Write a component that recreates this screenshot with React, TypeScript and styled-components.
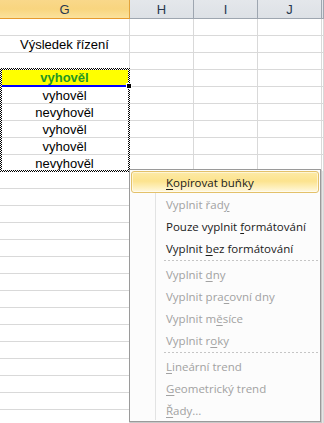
import styled, { createGlobalStyle } from "styled-components";

const GlobalStyle = createGlobalStyle`
  html, body {
    margin: 0;
    padding: 0;
    background: #ffffff;
    overflow: hidden;
  }
`;

const columns = ["G", "H", "I", "J", ""];
const ROW_COUNT = 24;

interface CellData {
  text: string;
  highlight?: boolean;
}

const cells: Record<number, CellData> = {
  1: { text: "Výsledek řízení" },
  3: { text: "vyhověl", highlight: true },
  4: { text: "vyhověl" },
  5: { text: "nevyhověl" },
  6: { text: "vyhověl" },
  7: { text: "vyhověl" },
  8: { text: "nevyhověl" },
};

interface MenuEntry {
  label: React.ReactNode;
  disabled?: boolean;
  active?: boolean;
  separator?: boolean;
}

const menu: MenuEntry[] = [
  { label: <><u>K</u>opírovat buňky</>, active: true },
  { label: <>Vyplnit řad<u>y</u></>, disabled: true },
  { label: <>Pouze vyplnit <u>f</u>ormátování</> },
  { label: <>Vyplnit <u>b</u>ez formátování</> },
  { label: null, separator: true },
  { label: <>Vyplnit <u>d</u>ny</>, disabled: true },
  { label: <>Vyplnit pra<u>c</u>ovní dny</>, disabled: true },
  { label: <>Vyplnit m<u>ě</u>síce</>, disabled: true },
  { label: <>Vyplnit r<u>o</u>ky</>, disabled: true },
  { label: null, separator: true },
  { label: <><u>L</u>ineární trend</>, disabled: true },
  { label: <><u>G</u>eometrický trend</>, disabled: true },
  { label: <><u>Ř</u>ady...</>, disabled: true },
];

const App = () => {
  return (
    <>
      <GlobalStyle />
      <Sheet>
        <Grid>
          {columns.map((c, i) => (
            <HeaderCell key={c + i} selected={i === 0}>
              {c}
            </HeaderCell>
          ))}
          {Array.from({ length: ROW_COUNT }).map((_, r) =>
            columns.map((c, i) => {
              const data = i === 0 ? cells[r] : undefined;
              return (
                <Cell key={r + "-" + i} highlight={data?.highlight}>
                  {data?.text}
                </Cell>
              );
            })
          )}
        </Grid>

        <CopyFrame />
        <FillHandle />

        <Menu>
          {menu.map((m, i) =>
            m.separator ? (
              <Separator key={i} />
            ) : (
              <MenuItem key={i} disabled={m.disabled} active={m.active}>
                <span>{m.label}</span>
              </MenuItem>
            )
          )}
        </Menu>
      </Sheet>
    </>
  );
};

const Sheet = styled.div`
  position: relative;
  width: 324px;
  height: 423px;
  overflow: hidden;
  background: #ffffff;
`;

const Grid = styled.div`
  display: grid;
  grid-template-columns: 130px 64px 64px 64px 1fr;
  grid-template-rows: 19px;
  grid-auto-rows: 17px;
`;

const HeaderCell = styled.div<{ selected?: boolean }>`
  box-sizing: border-box;
  display: flex;
  align-items: center;
  justify-content: center;
  font-family: "Liberation Sans", Arial, sans-serif;
  font-size: 13px;
  color: #27384f;
  border-right: 1px solid ${(p) => (p.selected ? "#e3a33b" : "#9ea6b0")};
  border-bottom: 1px solid ${(p) => (p.selected ? "#e69a2e" : "#9ea6b0")};
  background: ${(p) =>
    p.selected
      ? "linear-gradient(to bottom, #f9d88a 0%, #f8d57f 50%, #fbe29c 100%)"
      : "linear-gradient(to bottom, #e4e7eb 0%, #dde1e6 100%)"};
  padding-top: 1px;
`;

const Cell = styled.div<{ highlight?: boolean }>`
  box-sizing: border-box;
  display: flex;
  align-items: center;
  justify-content: center;
  font-family: "Liberation Sans", Arial, sans-serif;
  font-size: 13px;
  white-space: nowrap;
  border-right: 1px solid #d9d9d9;
  border-bottom: ${(p) => (p.highlight ? "2px solid #0000ff" : "1px solid #d9d9d9")};
  background: ${(p) => (p.highlight ? "#ffff00" : "transparent")};
  font-weight: ${(p) => (p.highlight ? 700 : 400)};
  color: ${(p) => (p.highlight ? "#249624" : "#000000")};
`;

const CopyFrame = styled.div`
  position: absolute;
  left: 0;
  top: 68px;
  width: 130px;
  height: 104px;
  box-sizing: border-box;
  padding: 2px;
  background: repeating-conic-gradient(#000 0 25%, #fff 0 50%) 0 0 / 2px 2px;
  -webkit-mask: linear-gradient(#000 0 0) content-box, linear-gradient(#000 0 0);
  -webkit-mask-composite: xor;
  mask-composite: exclude;
  pointer-events: none;
`;

const FillHandle = styled.div`
  position: absolute;
  left: 126px;
  top: 83px;
  width: 4px;
  height: 4px;
  background: #000;
  border: 1px solid #fff;
`;

const Menu = styled.div`
  position: absolute;
  left: 129px;
  top: 169px;
  width: 192px;
  box-sizing: border-box;
  padding: 1px 1px 0 1px;
  background: #fcfcfc;
  border: 1px solid #9a9a9a;
  box-shadow: 1px 1px 0 #c8c8c8, 2px 2px 0 #e4e4e4;
  font-family: "Open Sans", "Noto Sans", sans-serif;
  font-size: 11.5px;

  &::before {
    content: "";
    position: absolute;
    left: 25px;
    top: 1px;
    bottom: 1px;
    width: 1px;
    background: #e2e3e3;
  }
`;

const MenuItem = styled.div<{ disabled?: boolean; active?: boolean }>`
  position: relative;
  box-sizing: border-box;
  height: 22px;
  display: flex;
  align-items: center;
  padding-left: 34px;
  white-space: nowrap;
  color: ${(p) => (p.disabled ? "#a2a2a2" : "#1a1a1a")};
  border: 1px solid ${(p) => (p.active ? "#e3c16a" : "transparent")};
  border-radius: 3px;
  background: ${(p) =>
    p.active
      ? "linear-gradient(to bottom, #fdeaa6 0%, #fce38e 45%, #fef1c0 80%, #fff8e2 100%)"
      : "transparent"};
  box-shadow: ${(p) => (p.active ? "inset 0 0 0 1px rgba(255,255,255,0.55)" : "none")};
  z-index: 1;

  u {
    text-underline-offset: 2px;
  }
`;

const Separator = styled.div`
  height: 4px;
  margin-left: 33px;
  margin-right: 1px;
  background: linear-gradient(to right, #c5c5c5 50%, transparent 50%) 0 1px / 4px 1px repeat-x;
`;

export default App;
